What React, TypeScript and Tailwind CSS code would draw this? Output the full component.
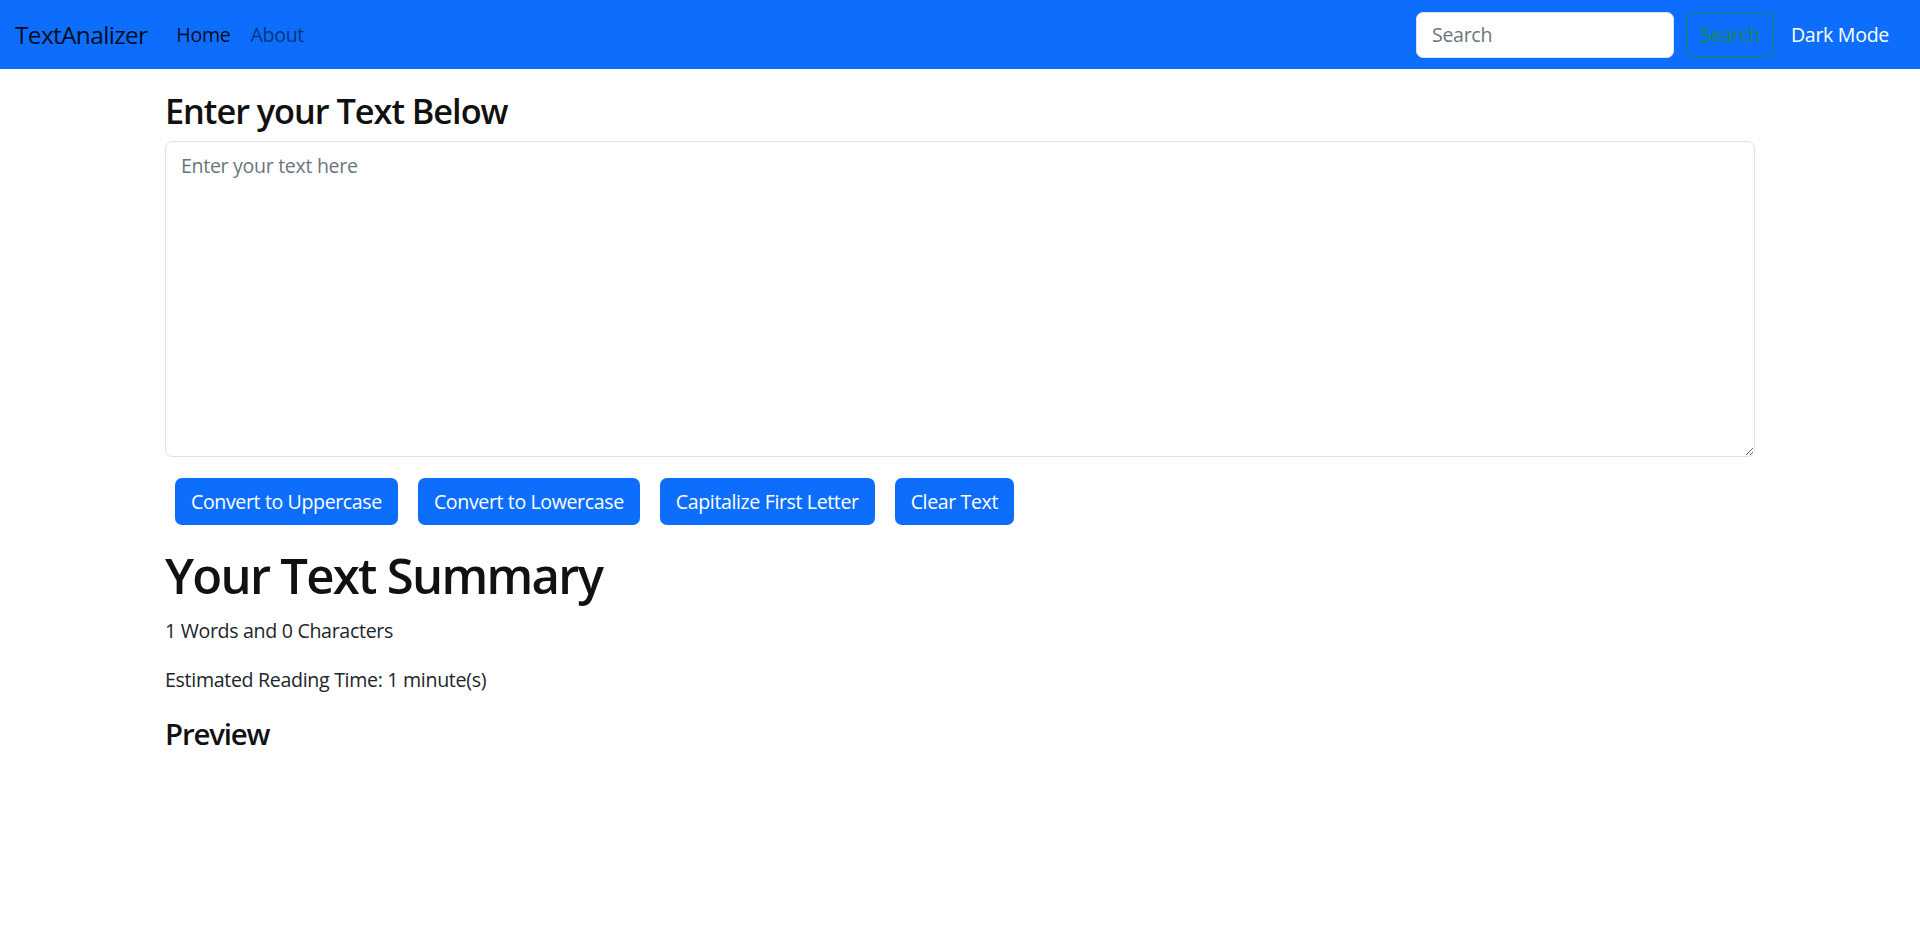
import { useState } from "react";

const buttons = [
  "Convert to Uppercase",
  "Convert to Lowercase",
  "Capitalize First Letter",
  "Clear Text",
];

export default function App() {
  const [text, setText] = useState("");

  return (
    <div className="min-h-screen bg-white font-['Open_Sans',sans-serif] tracking-[-0.02em] text-[#212529]">
      <nav className="flex h-[69px] items-center bg-[#0d6efd] pl-[15px] pr-[31px]">
        <a href="#" className="mr-[19px] text-[24.5px] leading-[37px] tracking-[-0.028em] text-black/90">
          TextAnalizer
        </a>
        <ul className="flex text-[19.6px] leading-[29px]">
          <li>
            <a href="#" className="px-[10px] text-black/90">
              Home
            </a>
          </li>
          <li>
            <a href="#" className="px-[10px] text-black/55">
              About
            </a>
          </li>
        </ul>

        <form className="ml-auto flex items-center">
          <input
            type="search"
            placeholder="Search"
            className="h-[46px] w-[258px] rounded-[7px] border border-[#dee2e6] bg-white px-[15px] text-[19.6px] outline-none placeholder:text-[#6c757d]"
          />
          <button
            type="button"
            className="ml-[12px] flex h-[46px] w-[88px] items-center justify-center rounded-[7px] border border-[#198754] text-[19.6px] text-[#198754]"
          >
            Search
          </button>
        </form>
        <span className="ml-[17px] text-[19.6px] text-white">Dark Mode</span>
      </nav>

      <div className="mx-auto w-[1590px] pt-[21px]">
        <h3 className="mb-[10px] text-[34.3px] font-semibold leading-[41px] tracking-[-0.03em] text-[#111]">
          Enter your Text Below
        </h3>
        <textarea
          value={text}
          onChange={(e) => setText(e.target.value)}
          placeholder="Enter your text here"
          className="block h-[316px] w-full rounded-[7px] border border-[#dee2e6] px-[15px] pt-[9px] pb-[7px] text-[19.6px] leading-[29.4px] outline-none placeholder:text-[#6c757d]"
        />

        <div className="mt-[21px] flex gap-[20px] pl-[10px]">
          {buttons.map((label) => (
            <button
              key={label}
              type="button"
              className="flex h-[47px] items-center rounded-[7px] bg-[#0d6efd] px-[16px] pt-[1px] text-[19.6px] tracking-[-0.02em] text-white"
            >
              {label}
            </button>
          ))}
        </div>

        <h1 className="mt-[21px] mb-[11px] text-[49px] font-semibold leading-[59px] tracking-[-0.035em] text-[#111]">
          Your Text Summary
        </h1>
        <p className="mb-[20px] text-[19.6px] leading-[29.4px]">
          1 Words and 0 Characters
        </p>
        <p className="mb-[20px] text-[19.6px] leading-[29.4px]">
          Estimated Reading Time: 1 minute(s)
        </p>
        <h4 className="pt-[2px] text-[29.4px] font-semibold leading-[35px] tracking-[-0.04em] text-[#111]">
          Preview
        </h4>
        <p className="text-[19.6px] leading-[29.4px]">{text}</p>
      </div>
    </div>
  );
}
